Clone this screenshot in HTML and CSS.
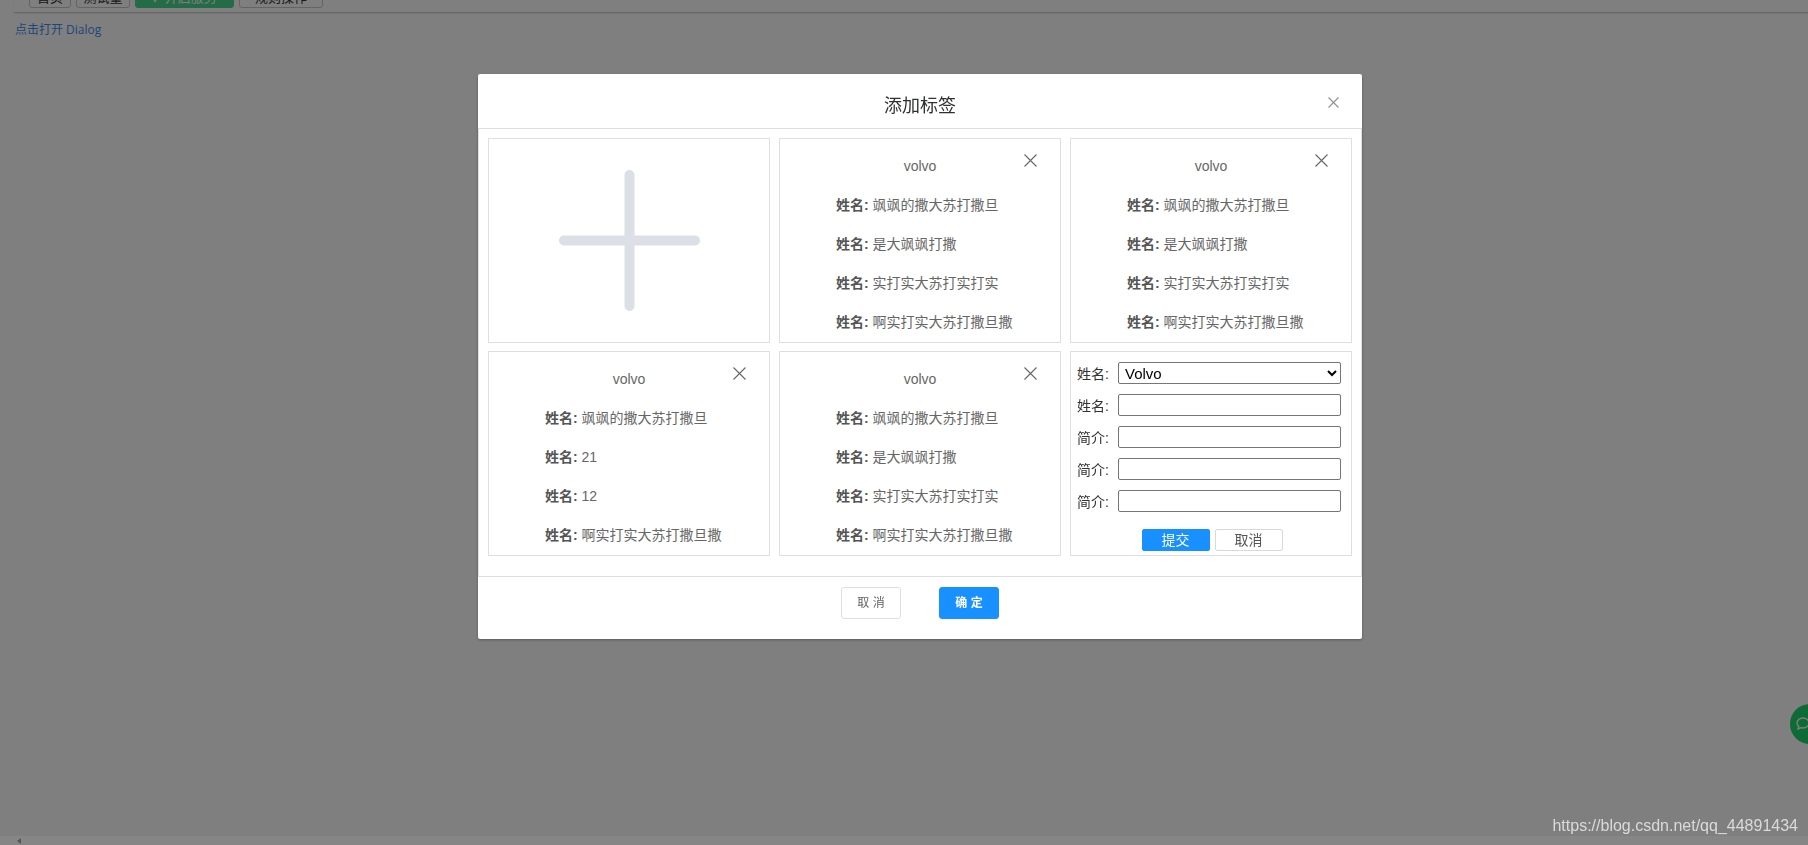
FILE: index.html
```html
<!DOCTYPE html>
<html lang="zh-CN">
<head>
<meta charset="utf-8">
<title>添加标签</title>
<link rel="stylesheet" href="styles.css">
</head>
<body>
<div class="page">
  <div class="topnav">
    <button class="nav-btn w1">首页</button>
    <button class="nav-btn w2">测试量</button>
    <button class="nav-btn nav-green w3">✓ 开启服务</button>
    <button class="nav-btn w4">规则操作</button>
  </div>
  <a class="open-link">点击打开 Dialog</a>
</div>

<div class="float-btn">
  <svg width="16" height="16" viewBox="0 0 16 16"><path d="M8 2c3.3 0 6 2.2 6 5s-2.7 5-6 5c-.7 0-1.3-.1-1.9-.3L3 13l.8-2.6C2.7 9.5 2 8.3 2 7c0-2.8 2.7-5 6-5z" fill="none" stroke="#fff" stroke-width="1.4"/></svg>
</div>

<div class="overlay">
  <div class="dialog">
    <div class="dlg-header">
      <span class="dlg-title">添加标签</span>
      <button class="dlg-close" aria-label="close">
        <svg width="11" height="11" viewBox="0 0 11 11"><path d="M0.5 0.5L10.5 10.5M10.5 0.5L0.5 10.5" stroke="#909399" stroke-width="1.2"/></svg>
      </button>
    </div>
    <div class="dlg-body">
      <div class="grid">
        <div class="card card-add">
          <svg width="141" height="141" viewBox="0 0 141 141"><path d="M70.5 5V136M5 70.5H136" stroke="#dcdfe6" stroke-width="10" stroke-linecap="round"/></svg>
        </div>

        <div class="card card-info">
          <svg class="card-close" width="13" height="13" viewBox="0 0 13 13"><path d="M0.5 0.5L12.5 12.5M12.5 0.5L0.5 12.5" stroke="#666" stroke-width="1.1"/></svg>
          <div class="card-title">volvo</div>
          <div class="card-rows">
            <div class="row"><b>姓名:</b> 飒飒的撒大苏打撒旦</div>
            <div class="row"><b>姓名:</b> 是大飒飒打撒</div>
            <div class="row"><b>姓名:</b> 实打实大苏打实打实</div>
            <div class="row"><b>姓名:</b> 啊实打实大苏打撒旦撒</div>
          </div>
        </div>

        <div class="card card-info">
          <svg class="card-close" width="13" height="13" viewBox="0 0 13 13"><path d="M0.5 0.5L12.5 12.5M12.5 0.5L0.5 12.5" stroke="#666" stroke-width="1.1"/></svg>
          <div class="card-title">volvo</div>
          <div class="card-rows">
            <div class="row"><b>姓名:</b> 飒飒的撒大苏打撒旦</div>
            <div class="row"><b>姓名:</b> 是大飒飒打撒</div>
            <div class="row"><b>姓名:</b> 实打实大苏打实打实</div>
            <div class="row"><b>姓名:</b> 啊实打实大苏打撒旦撒</div>
          </div>
        </div>

        <div class="card card-info">
          <svg class="card-close" width="13" height="13" viewBox="0 0 13 13"><path d="M0.5 0.5L12.5 12.5M12.5 0.5L0.5 12.5" stroke="#666" stroke-width="1.1"/></svg>
          <div class="card-title">volvo</div>
          <div class="card-rows">
            <div class="row"><b>姓名:</b> 飒飒的撒大苏打撒旦</div>
            <div class="row"><b>姓名:</b> 21</div>
            <div class="row"><b>姓名:</b> 12</div>
            <div class="row"><b>姓名:</b> 啊实打实大苏打撒旦撒</div>
          </div>
        </div>

        <div class="card card-info">
          <svg class="card-close" width="13" height="13" viewBox="0 0 13 13"><path d="M0.5 0.5L12.5 12.5M12.5 0.5L0.5 12.5" stroke="#666" stroke-width="1.1"/></svg>
          <div class="card-title">volvo</div>
          <div class="card-rows">
            <div class="row"><b>姓名:</b> 飒飒的撒大苏打撒旦</div>
            <div class="row"><b>姓名:</b> 是大飒飒打撒</div>
            <div class="row"><b>姓名:</b> 实打实大苏打实打实</div>
            <div class="row"><b>姓名:</b> 啊实打实大苏打撒旦撒</div>
          </div>
        </div>

        <div class="card card-form">
          <div class="frow">
            <label class="flabel">姓名:</label>
            <select class="fselect"><option>Volvo</option><option>Saab</option></select>
          </div>
          <div class="frow">
            <label class="flabel">姓名:</label>
            <input class="finput" type="text">
          </div>
          <div class="frow">
            <label class="flabel">简介:</label>
            <input class="finput" type="text">
          </div>
          <div class="frow">
            <label class="flabel">简介:</label>
            <input class="finput" type="text">
          </div>
          <div class="frow">
            <label class="flabel">简介:</label>
            <input class="finput" type="text">
          </div>
          <div class="factions">
            <button class="fbtn fbtn-primary">提交</button>
            <button class="fbtn">取消</button>
          </div>
        </div>
      </div>
    </div>
    <div class="dlg-footer">
      <button class="btn">取 消</button>
      <button class="btn btn-primary">确 定</button>
    </div>
  </div>
</div>

<div class="watermark">https://blog.csdn.net/qq_44891434</div>
<div class="hscroll"><span class="hs-arrow"></span></div>
</body>
</html>
```

FILE: styles.css
```css
* { box-sizing: border-box; }

html, body {
  margin: 0;
  padding: 0;
  height: 100%;
  overflow: hidden;
  background: #ffffff;
  font-family: "Liberation Sans", "Noto Sans CJK SC", sans-serif;
}

.page {
  padding: 0;
}

.topnav {
  display: flex;
  gap: 5px;
  margin: -20px 0 0 14px;
  padding-left: 15px;
  height: 33px;
  border-bottom: 1px solid #cfcfcf;
  box-shadow: 0 1px 2px rgba(0,0,0,0.08);
}

.nav-btn {
  display: flex;
  align-items: flex-end;
  justify-content: center;
  height: 28px;
  padding: 0 0 1px;
  border: 1px solid #c8c8c8;
  border-radius: 3px;
  background: #ffffff;
  color: #333;
  font-family: inherit;
  font-size: 13px;
  line-height: 16px;
}
.nav-btn.w1 { width: 42px; }
.nav-btn.w2 { width: 54px; }
.nav-btn.w3 { width: 99px; }
.nav-btn.w4 { width: 84px; }
.nav-green {
  background: #48d690;
  border-color: #48d690;
  color: #fff;
}

.open-link {
  display: block;
  margin: 8px 0 0 15px;
  font-size: 12px;
  line-height: 17px;
  color: #3d8ef0;
  font-family: "Open Sans", "Noto Sans CJK SC", sans-serif;
}

.float-btn {
  position: fixed;
  top: 704px;
  right: -22px;
  width: 40px;
  height: 40px;
  border-radius: 50%;
  background: #1cd66a;
  display: flex;
  align-items: center;
  padding-left: 5px;
}

.overlay {
  position: fixed;
  inset: 0;
  background: rgba(0, 0, 0, 0.5);
  overflow: hidden;
}

.dialog {
  width: 884px;
  margin: 74px 0 0 478px;
  background: #ffffff;
  border-radius: 2px;
  box-shadow: 0 1px 3px rgba(0, 0, 0, 0.3);
}

.dlg-header {
  position: relative;
  padding: 20px 20px 10px;
  text-align: center;
}

.dlg-title {
  display: block;
  font-size: 18px;
  line-height: 24px;
  color: #303133;
}

.dlg-close {
  position: absolute;
  top: 23px;
  right: 23px;
  width: 11px;
  height: 11px;
  padding: 0;
  border: 0;
  background: transparent;
  display: flex;
}

.dlg-body {
  border: 1px solid #dcdfe6;
  padding: 9px 9px 20px;
}

.grid {
  display: grid;
  grid-template-columns: repeat(3, 282px);
  grid-auto-rows: 205px;
  column-gap: 9px;
  row-gap: 8px;
}

.card {
  position: relative;
  border: 1px solid #dcdfe6;
  background: #fff;
}

.card-add {
  display: flex;
  align-items: center;
  justify-content: center;
}

.card-close {
  position: absolute;
  top: 15px;
  right: 23px;
}

.card-title {
  margin-top: 17px;
  text-align: center;
  font-size: 14px;
  line-height: 20px;
  color: #666;
}

.card-rows {
  display: flex;
  flex-direction: column;
  gap: 19px;
  margin-top: 19px;
  padding-left: 56px;
}

.row {
  font-size: 14px;
  line-height: 20px;
  color: #666;
  white-space: nowrap;
}
.row b {
  color: #555;
  font-weight: bold;
}

.card-form {
  padding: 10px 10px 0 6px;
}

.frow {
  display: flex;
  align-items: center;
  height: 22px;
  margin-bottom: 10px;
  gap: 9px;
}

.flabel {
  width: 32px;
  font-size: 14px;
  color: #333;
  white-space: nowrap;
}

.fselect {
  width: 223px;
  height: 22px;
  margin: 0;
  padding-left: 2px;
  font-family: "Liberation Sans", sans-serif;
  font-size: 15px;
  color: #000;
  border: 1px solid #767676;
  border-radius: 2px;
  background: #fff;
}

.finput {
  width: 223px;
  height: 22px;
  margin: 0;
  padding: 1px 2px;
  border: 1px solid #767676;
  border-radius: 2px;
  font-size: 13px;
}

.factions {
  display: flex;
  justify-content: center;
  gap: 5px;
  margin-top: 17px;
  padding-left: 6px;
}

.fbtn {
  width: 68px;
  height: 22px;
  padding: 0;
  border: 1px solid #d9d9d9;
  border-radius: 2px;
  background: #fff;
  color: #555;
  font-family: inherit;
  font-size: 14px;
  line-height: 20px;
}
.fbtn-primary {
  background: #1890ff;
  border-color: #1890ff;
  color: #fff;
}

.dlg-footer {
  display: flex;
  justify-content: center;
  gap: 38px;
  padding: 10px 20px 20px;
}

.btn {
  width: 60px;
  height: 32px;
  padding: 0;
  border: 1px solid #dcdfe6;
  border-radius: 3px;
  background: #fff;
  color: #606266;
  font-family: inherit;
  font-size: 12px;
  line-height: 30px;
}
.btn-primary {
  background: #1890ff;
  border-color: #1890ff;
  color: #fff;
  font-weight: bold;
}

.watermark {
  position: fixed;
  right: 10px;
  bottom: 10px;
  font-family: "Liberation Sans", sans-serif;
  font-size: 16px;
  line-height: 18px;
  color: #dadada;
}

.hscroll {
  position: fixed;
  left: 0;
  right: 0;
  bottom: 0;
  height: 9px;
  background: #868686;
}
.hs-arrow {
  display: block;
  width: 0;
  height: 0;
  margin: 2px 0 0 17px;
  border-top: 3px solid transparent;
  border-bottom: 3px solid transparent;
  border-right: 4px solid #555;
}
```
